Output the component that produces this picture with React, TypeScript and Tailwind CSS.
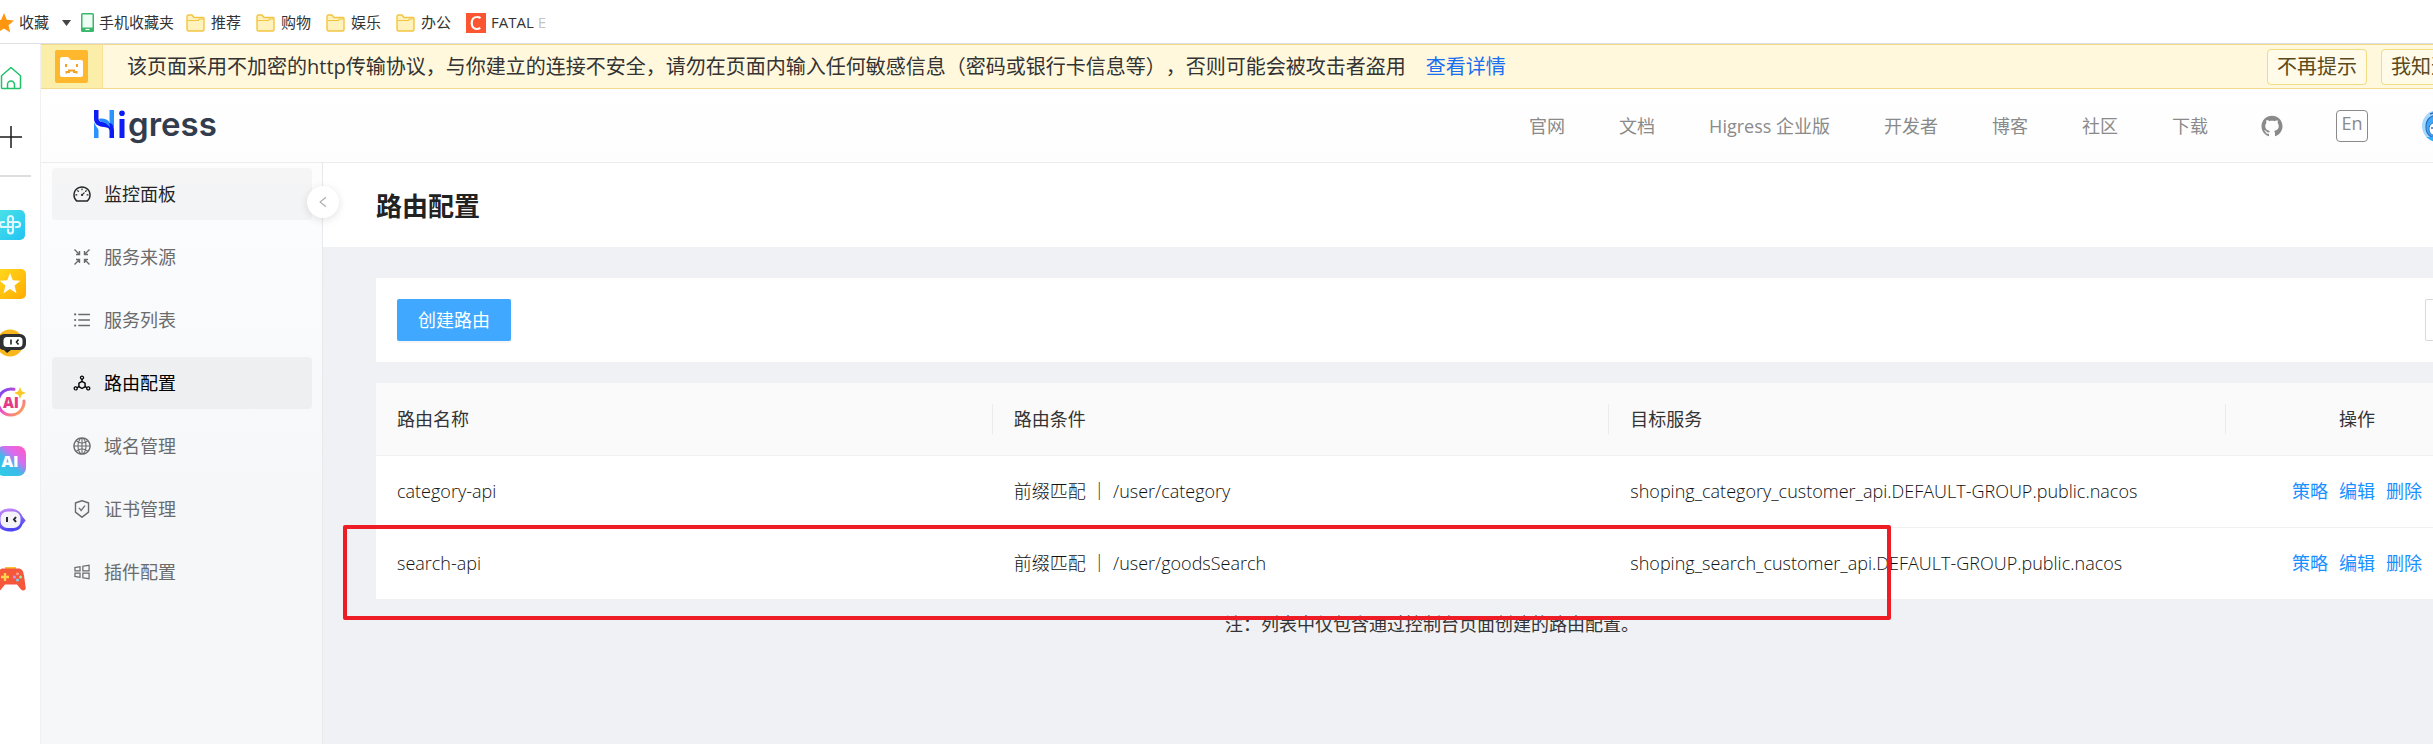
import type { ReactNode } from "react";
import {
  AiOutlineDashboard,
  AiOutlineUnorderedList,
  AiOutlineDeploymentUnit,
  AiOutlineGlobal,
  AiOutlineSafetyCertificate,
  AiOutlineWindows,
  AiOutlineLeft,
  AiFillGithub,
} from "react-icons/ai";

const UI_FONT = "font-['Open_Sans','Noto_Sans_CJK_SC',sans-serif]";

function FolderIcon() {
  return (
    <svg width="19" height="18" viewBox="0 0 19 18" fill="none">
      <path d="M1 2.5A1.5 1.5 0 0 1 2.500 1H6l2 2.500h9A1.200 1.200 0 0 1 18 4.700V15.500A1.500 1.500 0 0 1 16.500 17h-14A1.500 1.500 0 0 1 1 15.500z" fill="#fff2bd" stroke="#f3c53f" strokeWidth="1.400" />
      <path d="M1.500 6.500h11l1-1.500h4" stroke="#f3c53f" strokeWidth="1.200" />
    </svg>
  );
}

function PhoneIcon() {
  return (
    <svg width="13" height="19" viewBox="0 0 13 19">
      <rect width="13" height="19" rx="1.500" fill="#39b86c" />
      <rect x="1.500" y="1.500" width="10" height="13" fill="#effcf3" />
      <path d="M4.500 16.500h4" stroke="#fff" strokeWidth="1.200" />
    </svg>
  );
}

function InwardArrowsIcon() {
  return (
    <svg width="20" height="20" viewBox="0 0 20 20" fill="none" stroke="currentColor" strokeWidth="1.400">
      <path d="M2.500 2.500l4.500 4.500M7.500 4v3.500H4M17.500 2.500L13 7M12.500 4v3.500H16M2.500 17.500L7 13M7.500 16v-3.500H4M17.500 17.500L13 13M12.500 16v-3.500H16" />
    </svg>
  );
}

function HomeIcon() {
  return (
    <svg width="22" height="24" viewBox="0 0 22 24" fill="none" stroke="#1fc268" strokeWidth="1.500" strokeLinejoin="round">
      <path d="M1.500 9.800L11 1.500l9.500 8.300v11.700a1 1 0 0 1-1 1h-17a1 1 0 0 1-1-1z" />
      <path d="M7.500 22.500v-4a3.500 3.500 0 0 1 7 0v4" />
    </svg>
  );
}

function PlusIcon() {
  return (
    <svg width="22" height="22" viewBox="0 0 22 22" stroke="#1b1b1b" strokeWidth="1.500">
      <path d="M11 0v22M0 11h22" />
    </svg>
  );
}

function CloverIcon() {
  return (
    <svg width="30" height="30" viewBox="0 0 30 30" fill="none">
      <defs>
        <linearGradient id="clover" x1="0" y1="0" x2="1" y2="1">
          <stop stopColor="#4be3e6" />
          <stop offset="1" stopColor="#22c3f5" />
        </linearGradient>
      </defs>
      <rect width="29" height="30" rx="5" fill="url(#clover)" />
      <path d="M12 17V8.500a2.500 2.500 0 0 1 5 0V10M12 17H6.500a2.500 2.500 0 0 1 0-5H8M17 12h4.500a2.500 2.500 0 0 1 0 5H20M17 12v9a2.500 2.500 0 0 1-5 0v-1.500M12 17h5M12 12h5" stroke="#dff8fd" strokeWidth="2.200" strokeLinecap="round" />
    </svg>
  );
}

function StarTileIcon() {
  return (
    <svg width="30" height="30" viewBox="0 0 30 30">
      <defs>
        <linearGradient id="startile" x1="0" y1="0" x2="1" y2="1">
          <stop stopColor="#ffd91f" />
          <stop offset="1" stopColor="#ffab00" />
        </linearGradient>
      </defs>
      <rect width="30" height="30" rx="5" fill="url(#startile)" />
      <path d="M14 4l2.800 7.300 7.700.4-6 4.900 2 7.600L14 20l-6.500 4.200 2-7.600-6-4.900 7.700-.4z" fill="#fff" />
    </svg>
  );
}

function VisorBotIcon() {
  return (
    <svg width="30" height="30" viewBox="0 0 30 30">
      <circle cx="14" cy="15" r="13.500" fill="#f9b71c" />
      <path d="M8 22h7l-4 3z" fill="#222" />
      <rect x="2" y="6" width="28" height="16" rx="6" fill="#2f3033" />
      <rect x="7.500" y="9" width="19" height="10" rx="3.500" fill="#fff" />
      <path d="M15 11.500v5M22.500 11.500l-2 2.500 2 2.500" stroke="#222" strokeWidth="1.600" fill="none" />
    </svg>
  );
}

function AiRingIcon() {
  return (
    <svg width="30" height="30" viewBox="0 0 30 30">
      <defs>
        <linearGradient id="ring" x1="0" y1="0" x2="1" y2="1">
          <stop stopColor="#5b46f5" />
          <stop offset="0.500" stopColor="#f04fc8" />
          <stop offset="1" stopColor="#ffb13c" />
        </linearGradient>
      </defs>
      <path d="M18 2.300A13 13 0 1 0 28 14" fill="none" stroke="url(#ring)" strokeWidth="3" strokeLinecap="round" />
      <text x="15" y="21" textAnchor="middle" fontSize="15" fontWeight="800" fontFamily="Open Sans" fill="#e63a86">AI</text>
      <path d="M24 0l1.700 4.300L30 6l-4.300 1.700L24 12l-1.700-4.300L18 6l4.300-1.700z" fill="#fbc926" />
    </svg>
  );
}

function AiTileIcon() {
  return (
    <svg width="30" height="30" viewBox="0 0 30 30">
      <defs>
        <linearGradient id="aitile" x1="1" y1="0.100" x2="0.200" y2="1">
          <stop stopColor="#ff5bc6" />
          <stop offset="0.350" stopColor="#d56df0" />
          <stop offset="0.600" stopColor="#3fb9ea" />
          <stop offset="1" stopColor="#2ccbe6" />
        </linearGradient>
      </defs>
      <rect width="30" height="30" rx="8" fill="url(#aitile)" />
      <text x="14" y="21" textAnchor="middle" fontSize="16" fontWeight="800" fontFamily="Open Sans" fill="#fff">AI</text>
    </svg>
  );
}

function HelmetBotIcon() {
  return (
    <svg width="30" height="30" viewBox="0 0 30 30">
      <defs>
        <linearGradient id="helmet" x1="0" y1="0" x2="0.300" y2="1">
          <stop stopColor="#cf8cfb" />
          <stop offset="1" stopColor="#4a44f2" />
        </linearGradient>
      </defs>
      <path d="M14 3.500c7 0 11 4 12.500 8l3.200 4-3.200 4c-2 5-6 7-12.500 7-8 0-13-4-13-11.500s5-11.500 13-11.500z" fill="url(#helmet)" />
      <rect x="4.500" y="6.500" width="20" height="16.500" rx="7" fill="#f4f4f8" />
      <path d="M11 12v5M20 12l-2 2.500 2 2.500" stroke="#27272f" strokeWidth="2" fill="none" />
    </svg>
  );
}

function GamepadIcon() {
  return (
    <svg width="30" height="30" viewBox="0 0 30 30">
      <path d="M9 3h11v4H9z" fill="#fbc12f" />
      <path d="M7 4.500h15c4 0 5 2 6 7l1.700 12c.4 3-2.700 4-4.700 2l-4-5H9l-4 5c-2 2-5 1-4.700-2L2 11.500c1-5 2-7 5-7z" fill="#f4573a" />
      <path d="M9 9v8M5 13h8" stroke="#ffd34a" strokeWidth="2.400" />
      <circle cx="21.500" cy="9.800" r="1.500" fill="#ff9a9a" />
      <circle cx="21.500" cy="16" r="1.500" fill="#6fd7ff" />
      <circle cx="18.400" cy="13" r="1.500" fill="#c59bff" />
      <circle cx="24.600" cy="13" r="1.500" fill="#8cf0a0" />
    </svg>
  );
}

function WarningIcon() {
  return (
    <svg width="33" height="33" viewBox="0 0 33 33">
      <rect width="33" height="33" rx="2" fill="#ffb72e" />
      <path d="M5 9a2 2 0 0 1 2-2h6l3 3h10a2 2 0 0 1 2 2v13a2 2 0 0 1-2 2H7a2 2 0 0 1-2-2z" fill="#fff" />
      <path d="M11 14v3M22 14v3M11.500 23.500v-1.500h2.500v-1.500h5v1.500h2.500v1.500" stroke="#f0a127" strokeWidth="2" fill="none" />
    </svg>
  );
}

function HigressMark() {
  return (
    <svg width="31" height="28" viewBox="0 0 31 28">
      <path d="M0 12c2 5 4 6 4.500 8v8H0z" fill="#2a93ff" />
      <path d="M15.500 0H20v17c-2-2-4.500-3-4.500-6z" fill="#2a93ff" />
      <path d="M0 0h4.500v8c0 3 2 4 5.500 4 5.500 0 10 1 10 8v8h-4.500v-7c0-3-2-3.500-5.500-4C4 16.500 0 14 0 8.500z" fill="#0b1cf5" />
      <path d="M5 9c3-1 8 0 10 2.500l1 5.500c-3-2-3-3.500-6.500-4.500C7 12 5 11 5 9z" fill="#2a8bff" />
      <circle cx="28" cy="3.200" r="2.800" fill="#0b1cf5" />
      <path d="M25.500 9h5v19h-5z" fill="#0b1cf5" />
    </svg>
  );
}

function Avatar() {
  return (
    <svg width="32" height="32" viewBox="0 0 32 32">
      <defs>
        <clipPath id="face"><circle cx="16" cy="16" r="16" /></clipPath>
      </defs>
      <g clipPath="url(#face)">
        <rect width="32" height="32" fill="#a5d8ff" />
        <path d="M4 17C4 9 9 5 16 5s12 4 12 12-5 11-12 11S4 25 4 17z" fill="#3fa9f5" stroke="#2f6fc0" strokeWidth="1.200" />
        <path d="M7 19c0-5 4-7 9-7s9 2 9 7-4 7-9 7-9-2-9-7z" fill="#fff" stroke="#2f6fc0" />
        <path d="M8 4l3-1 2 2M9 18h3M19 18h3" stroke="#2f6fc0" strokeWidth="1.400" fill="none" />
        <path d="M4 27h24v5H4z" fill="#30aefb" />
      </g>
    </svg>
  );
}

const folders = ["推荐", "购物", "娱乐", "办公"];

const tools: { label: string; icon: ReactNode }[] = [
  { label: "健康", icon: <CloverIcon /> },
  { label: "收藏", icon: <StarTileIcon /> },
  { label: "助手", icon: <VisorBotIcon /> },
  { label: "AI 工具", icon: <AiRingIcon /> },
  { label: "AI 创作", icon: <AiTileIcon /> },
  { label: "机器人", icon: <HelmetBotIcon /> },
  { label: "游戏", icon: <GamepadIcon /> },
];

const menu: { label: string; icon: ReactNode; state?: "hover" | "active" }[] = [
  { label: "监控面板", icon: <AiOutlineDashboard size={20} />, state: "hover" },
  { label: "服务来源", icon: <InwardArrowsIcon /> },
  { label: "服务列表", icon: <AiOutlineUnorderedList size={20} /> },
  { label: "路由配置", icon: <AiOutlineDeploymentUnit size={20} />, state: "active" },
  { label: "域名管理", icon: <AiOutlineGlobal size={20} /> },
  { label: "证书管理", icon: <AiOutlineSafetyCertificate size={20} /> },
  { label: "插件配置", icon: <AiOutlineWindows size={20} /> },
];

const menuTone = {
  hover: "bg-black/[0.03] text-[#262626]",
  active: "bg-black/[0.04] text-black",
  idle: "text-[#6b6b6c]",
};

const navLinks = ["官网", "文档", "Higress 企业版", "开发者", "博客", "社区", "下载"];

const routes = [
  { name: "category-api", match: "前缀匹配 ｜ /user/category", service: "shoping_category_customer_api.DEFAULT-GROUP.public.nacos" },
  { name: "search-api", match: "前缀匹配 ｜ /user/goodsSearch", service: "shoping_search_customer_api.DEFAULT-GROUP.public.nacos" },
];

const columns = ["路由名称", "路由条件", "目标服务"];

function BookmarkBar() {
  return (
    <div className="flex h-11 items-center border-b border-[#dfdfe3] bg-white pt-0.5 text-[15px] text-[#333]">
      <a href="#fav" className="-ml-1.5 flex items-center gap-[5px] whitespace-nowrap">
        <svg width="20" height="20" viewBox="0 0 20 20">
          <path d="M10 0l2.800 6.800 7.200.6-5.500 4.800 1.700 7.300L10 15.600l-6.200 3.900 1.700-7.300L0 7.400l7.200-.6z" fill="#ff9610" />
        </svg>
        收藏
        <svg width="9" height="6" viewBox="0 0 9 6" className="ml-2"><path d="M0 0h9L4.500 6z" fill="#444" /></svg>
      </a>
      <a href="#mobile" className="ml-2.5 flex items-center gap-[5px] whitespace-nowrap"><PhoneIcon />手机收藏夹</a>
      <div className="ml-3 flex gap-[15px]">
        {folders.map((name) => (
          <a key={name} href={"#" + name} className="flex items-center gap-1.5 whitespace-nowrap"><FolderIcon />{name}</a>
        ))}
      </div>
      <a href="#fatal" className="ml-[15px] flex items-center gap-[5px] whitespace-nowrap">
        <svg width="20" height="20" viewBox="0 0 20 20">
          <rect width="20" height="20" fill="#fc5531" />
          <path d="M14.500 5.200A5.300 5.300 0 0 0 11 4C7.800 4 5.700 6.500 5.700 10s2 6 5 6a6 6 0 0 0 3.600-1.200" fill="none" stroke="#fff" strokeWidth="2.200" />
        </svg>
        <span>FATAL <span className="text-[#c4c4c4]">E</span></span>
      </a>
    </div>
  );
}

function ToolStrip() {
  return (
    <div className="flex w-10 shrink-0 flex-col overflow-hidden bg-white pt-1">
      <button aria-label="主页" className="flex h-[59px] shrink-0 items-center"><HomeIcon /></button>
      <button aria-label="新建" className="flex h-[59px] shrink-0 items-center"><PlusIcon /></button>
      <div className="mt-[9px] mb-[18px] h-0.5 w-[31px] shrink-0 bg-[#dedede]" />
      {tools.map((tool) => (
        <button key={tool.label} aria-label={tool.label} className="-ml-1 flex h-[59px] shrink-0 items-center">{tool.icon}</button>
      ))}
    </div>
  );
}

function SecurityNotice() {
  return (
    <div className="flex h-[45px] items-stretch border-y border-[#f3d98b] bg-[#fff8dc] text-[20px] leading-7 whitespace-nowrap">
      <div className="flex w-[62px] shrink-0 items-center justify-center border-r border-[#f7e196] bg-[#fbeea9]"><WarningIcon /></div>
      <p className="flex flex-1 items-center pl-6 text-[#333] [text-spacing-trim:space-all]">
        该页面采用不加密的http传输协议，与你建立的连接不安全，请勿在页面内输入任何敏感信息（密码或银行卡信息等），否则可能会被攻击者盗用
        <a href="#detail" className="ml-5 text-[#1a6ff0]">查看详情</a>
      </p>
      <div className="flex items-center gap-3.5 pr-[43px] text-[#5b4a1c]">
        <button className="h-9 rounded border border-[#f0dc82] bg-[#fffbe8] px-[9px]">不再提示</button>
        <button className="h-9 rounded border border-[#f0dc82] bg-[#fffbe8] px-[9px]">我知道了</button>
      </div>
    </div>
  );
}

function Header() {
  return (
    <header className="flex h-[74px] items-center justify-between border-b border-[#ececec] bg-linear-to-b from-white to-[#fdfdfd] pr-[70px] pl-[53px]">
      <a href="#home" className="flex items-start gap-[3px] pb-1">
        <HigressMark />
        <span className="font-['Inter',sans-serif] text-[33px] leading-7 font-semibold text-[#333c4d]">gress</span>
      </a>
      <nav className="flex items-center gap-[54px] text-[18px] whitespace-nowrap text-[#8a8a8a]">
        <div className="flex gap-[54px] pt-0.5">
          {navLinks.map((label) => <a key={label} href={"#" + label}>{label}</a>)}
        </div>
        <a href="#github" aria-label="GitHub" className="-mx-0.5"><AiFillGithub size={24} /></a>
        <button className="flex size-8 items-center justify-center rounded-sm border border-[#8a8a8a] pb-1">En</button>
        <button aria-label="账户"><Avatar /></button>
      </nav>
    </header>
  );
}

function Sidebar() {
  return (
    <aside className="relative w-[282px] shrink-0 border-r border-[#e8e9eb] bg-linear-to-b from-[#fdfdfe] from-0% via-[#f8fafc] via-30% to-[#f5f7f9] to-60% pt-[5px]">
      <nav className="flex flex-col gap-[11px] pr-2.5 pl-[11px]">
        {menu.map((item) => (
          <a key={item.label} href={"#" + item.label} className={"flex h-[52px] items-center gap-3 rounded pl-5 text-[18px] " + menuTone[item.state ?? "idle"]}>
            {item.icon}
            {item.label}
          </a>
        ))}
      </nav>
      <button aria-label="收起菜单" className="absolute top-[23px] -right-[17px] z-10 flex size-8 items-center justify-center rounded-full bg-white text-[#a8a8a8] shadow-[0_2px_8px_rgba(0,0,0,0.12)]">
        <AiOutlineLeft size={14} />
      </button>
    </aside>
  );
}

function RouteTable() {
  return (
    <table className="mt-[21px] w-full table-fixed bg-white text-left text-[18px] leading-7 text-[#111]">
      <thead className="bg-[#fafafa] text-[#333]">
        <tr className="h-[72px] border-b border-[#f0f0f0]">
          {columns.map((label) => (
            <th key={label} className="p-0 font-normal">
              <div className="flex h-[30px] items-center border-r border-[#ececec] pl-[21px]">{label}</div>
            </th>
          ))}
          <th className="w-[262px] p-0 text-center font-normal">操作</th>
        </tr>
      </thead>
      <tbody>
        {routes.map((route) => (
          <tr key={route.name} className="h-[72px] border-b border-[#f0f0f0] font-light whitespace-nowrap">
            <td className="py-0 pr-0 pl-[21px]">{route.name}</td>
            <td className="py-0 pr-0 pl-[21px]">{route.match}</td>
            <td className="py-0 pr-0 pl-[21px]">{route.service}</td>
            <td className="p-0">
              <div className="flex justify-center gap-[11px] font-normal text-[#1890ff]">
                <a href="#policy">策略</a>
                <a href="#edit">编辑</a>
                <a href="#delete">删除</a>
              </div>
            </td>
          </tr>
        ))}
      </tbody>
    </table>
  );
}

export default function App() {
  return (
    <div className={"flex min-h-screen flex-col overflow-x-hidden bg-white " + UI_FONT}>
      <BookmarkBar />
      <div className="flex w-[calc(100%+91px)] flex-1">
        <ToolStrip />
        <div className="flex min-w-0 flex-1 flex-col border-l border-[#f0f0f0]">
          <SecurityNotice />
          <Header />
          <div className="flex flex-1">
            <Sidebar />
            <main className="relative min-w-0 flex-1 bg-[#eff1f5]">
              <h1 className="flex h-[84px] items-center bg-white pt-0.5 pl-[53px] text-[26px] font-bold text-[#222]">路由配置</h1>
              <div className="pt-[31px] pr-9 pl-[53px]">
                <div className="flex h-[84px] items-center justify-between bg-white px-[21px]">
                  <button className="h-[42px] rounded-xs bg-[#40a9ff] px-[21px] text-[18px] text-white shadow-[0_2px_0_rgba(0,0,0,0.04)]">创建路由</button>
                  <button aria-label="刷新" className="size-[42px] rounded-xs border border-[#d9d9d9] bg-white" />
                </div>
                <RouteTable />
                <p className="mt-2.5 text-center text-[18px] leading-7 text-[#333] [text-spacing-trim:space-all]">注：列表中仅包含通过控制台页面创建的路由配置。</p>
              </div>
              <div className="pointer-events-none absolute top-[362px] left-5 h-[95px] w-[1548px] rounded-xs border-4 border-[#ee1c25]" />
            </main>
          </div>
        </div>
      </div>
    </div>
  );
}
